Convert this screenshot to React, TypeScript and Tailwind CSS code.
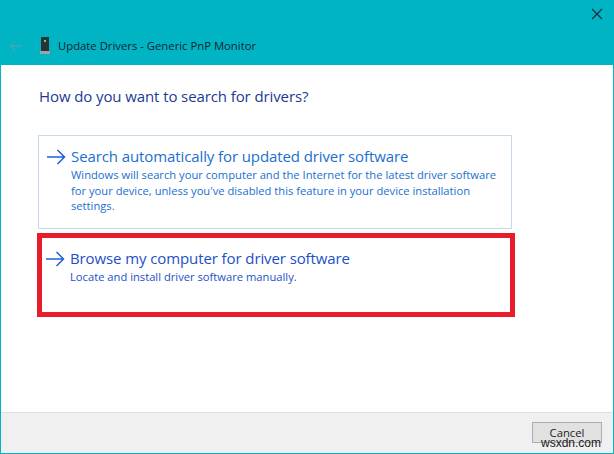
import React from 'react';

const Arrow = () => (
  <svg width="20" height="16" viewBox="0 0 20 16" fill="none" stroke="#1a62d8" strokeWidth="1.5" className="shrink-0">
    <path d="M1 8H18.5M11.5 1L18.5 8L11.5 15" />
  </svg>
);

const Option = ({ title, lines, color }: { title: string; lines: string[]; color: string }) => (
  <div className="flex gap-[5px]">
    <div className="pt-[4px]"><Arrow /></div>
    <div>
      <div className={`text-[15px] leading-[22px] tracking-[-0.1px] whitespace-nowrap ${color}`}>{title}</div>
      {lines.map((l) => (
        <div key={l} className={`text-[11.2px] leading-[15.5px] whitespace-nowrap ${color}`}>{l}</div>
      ))}
    </div>
  </div>
);

export default function App() {
  return (
    <div className="relative w-[614px] h-[454px] overflow-hidden bg-white font-['Open_Sans','Noto_Sans',sans-serif] border border-t-0 border-[#00b4c4]">
      <header className="h-[65px] bg-[#00b4c4] flex flex-col">
        <div className="flex justify-end pt-[8px] pr-[10px]">
          <svg width="12" height="12" viewBox="0 0 12 12" stroke="#1a2a38" strokeWidth="1.1">
            <path d="M1 1L11 11M11 1L1 11" />
          </svg>
        </div>
        <div className="flex items-center mt-[17px] pl-[8px]">
          <svg width="14" height="12" viewBox="0 0 14 12" fill="none" stroke="#3fa9b8" strokeWidth="1.3">
            <path d="M13 6H1.5M6 1.5L1.5 6L6 10.5" />
          </svg>
          <svg width="10" height="17" viewBox="0 0 10 17" className="ml-[17px]">
            <rect x="1" y="0" width="8" height="14" fill="#2a3238" />
            <rect x="0" y="14" width="10" height="3" fill="#9aa4a8" />
            <rect x="4" y="3" width="2" height="2" fill="#5fdc5f" />
          </svg>
          <span className="ml-[8px] text-[11.3px] leading-[16px] text-[#10242e] whitespace-nowrap">Update Drivers - Generic PnP Monitor</span>
        </div>
      </header>
      <main className="h-[347px] px-[37px] pt-[20px]">
        <h1 className="ml-[1px] text-[15px] leading-[22px] tracking-[-0.1px] font-normal text-[#1c3a94]">How do you want to search for drivers?</h1>
        <div className="mt-[28px] w-[474px] h-[94px] border border-[#c5d9e8] pl-[7px] pt-[9px]">
          <Option
            title="Search automatically for updated driver software"
            lines={[
              "Windows will search your computer and the Internet for the latest driver software",
              "for your device, unless you've disabled this feature in your device installation",
              "settings.",
            ]}
            color="text-[#1a6fd0]"
          />
        </div>
        <div className="mt-[4px] -ml-[1px] w-[478px] h-[84px] border-[5px] border-[#e81c2a] pl-[3px] pt-[9px]">
          <Option
            title="Browse my computer for driver software"
            lines={["Locate and install driver software manually."]}
            color="text-[#1c4fc8]"
          />
        </div>
      </main>
      <footer className="h-[41px] bg-[#f0f0f0] border-t border-[#dfdfdf] flex justify-end pt-[9px] pr-[11px]">
        <div className="w-[70px] h-[21px] bg-[#e1e1e1] border border-[#adadad] text-[11.3px] leading-[19px] text-center text-[#222]">Cancel</div>
      </footer>
      <div className="absolute left-[540px] top-[436px] leading-[15px] text-[#222] font-['Liberation_Sans',sans-serif] text-[12px]">wsxdn.com</div>
    </div>
  );
}
